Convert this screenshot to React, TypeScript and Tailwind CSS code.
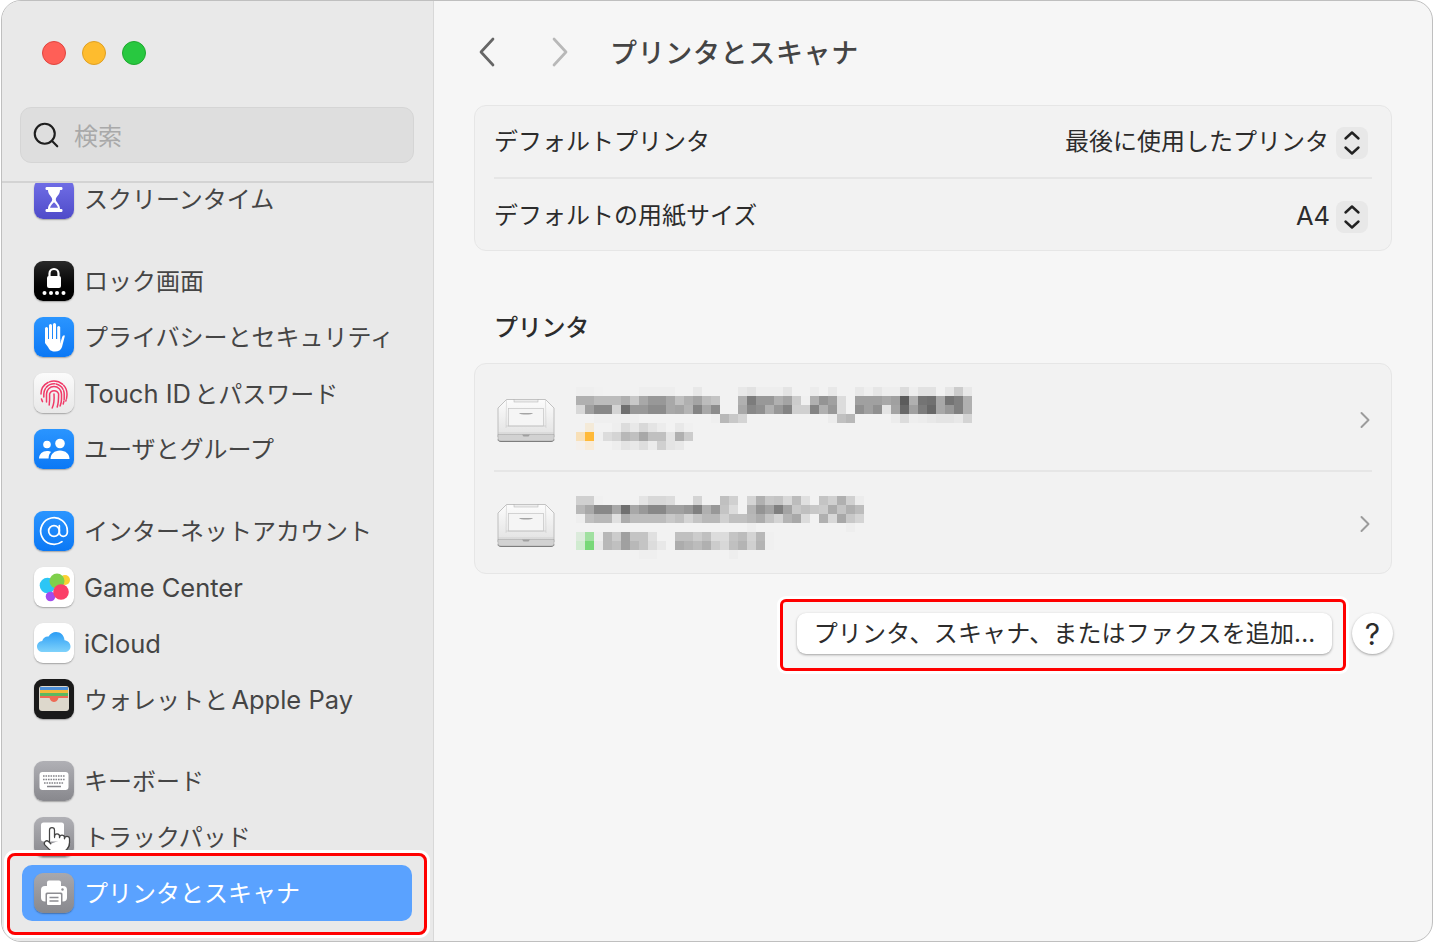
import type { ReactNode } from "react";
import { AtSign, ChevronRight, Pointer, Search } from "lucide-react";

const FONT = "font-['Inter','Noto_Sans_CJK_JP',sans-serif]";

function IconBox({ className, children }: { className: string; children: ReactNode }) {
  return (
    <div className={`relative w-10 h-10 shrink-0 rounded-[9px] overflow-hidden shadow-[0_1px_1.5px_rgba(0,0,0,0.3)] ${className}`}>
      {children}
    </div>
  );
}

function Glyph({ children }: { children: ReactNode }) {
  return (
    <svg viewBox="0 0 40 40" className="w-10 h-10 block">
      {children}
    </svg>
  );
}

// latin runs sit a little larger than the kana around them
const Lat = ({ children }: { children: ReactNode }) => <span className="text-[25.5px]">{children}</span>;
// the gap between latin and kana is narrower than a full space
const Thin = () => <span className="text-[12px]"> </span>;

const ScreenTimeIcon = () => (
  <IconBox className="bg-gradient-to-b from-[#7370e8] to-[#4f4bc9]">
    <Glyph>
      <rect x="11.500" y="8" width="17" height="3" rx="1.200" fill="#fff" />
      <rect x="11.500" y="30" width="17" height="3" rx="1.200" fill="#fff" />
      <path d="M14 11h12c0 5-4.200 6.800-4.200 9.500 0 2.700 4.200 4.500 4.200 9.500H14c0-5 4.200-6.800 4.200-9.500C18.200 17.800 14 16 14 11z" fill="#fff" />
      <path d="M16 28.800c.7-2.800 2.800-4.200 4-5.600 1.200 1.400 3.300 2.800 4 5.600z" fill="#6a66dc" />
    </Glyph>
  </IconBox>
);

const LockIcon = () => (
  <IconBox className="bg-gradient-to-b from-[#2a2a2a] to-black">
    <Glyph>
      <path d="M15.500 16v-3.500a4.500 4.500 0 0 1 9 0V16" fill="none" stroke="#fff" strokeWidth="2.200" />
      <rect x="13" y="15" width="14" height="12" rx="2" fill="#fff" />
      <circle cx="10.500" cy="32" r="2" fill="#fff" />
      <circle cx="17" cy="32" r="2" fill="#fff" />
      <circle cx="23" cy="32" r="2" fill="#fff" />
      <circle cx="29.500" cy="32" r="2" fill="#fff" />
    </Glyph>
  </IconBox>
);

const HandIcon = () => (
  <IconBox className="bg-gradient-to-b from-[#2a95ff] to-[#0a78f5]">
    <Glyph>
      <rect x="11" y="10" width="3" height="16" rx="1.500" fill="#fff" />
      <rect x="15" y="7" width="3" height="18" rx="1.500" fill="#fff" />
      <rect x="19" y="6" width="3" height="19" rx="1.500" fill="#fff" />
      <rect x="23.200" y="9" width="3" height="17" rx="1.500" fill="#fff" />
      <path d="M11 22h15.200v4.500l1.800-6c.8-2.500 3-3.200 2.700-1L28 30c-1 3-3.500 4.500-7 4.500-4 0-5.500-1.500-7-4.500l-3-4z" fill="#fff" />
    </Glyph>
  </IconBox>
);

const FingerprintIcon = () => (
  <IconBox className="bg-gradient-to-b from-[#fbfbfb] to-[#e8e8e8]">
    <Glyph>
      <g fill="none" stroke="#f03a68" strokeWidth="1.500" strokeLinecap="round">
        <path d="M7 21a13 13 0 0 1 26 0c0 3-.5 5-1.200 7" strokeDasharray="14 1.500" />
        <path d="M9.800 24v-3a10.200 10.200 0 0 1 20.400 0v4c0 2-.4 4-1 6" strokeDasharray="9 1.500" />
        <path d="M12.500 29v-8a7.500 7.500 0 0 1 15 0v5c0 3-.6 5-1.400 7" />
        <path d="M15.200 32c.4-3 .6-6 .4-11a4.700 4.700 0 0 1 9 0c0 5 0 9-1.400 13" />
        <path d="M20 21c.4 5 0 10-1.800 14" />
        <path d="M7.500 26c.3 1 .6 1.800 1 2.600" />
      </g>
    </Glyph>
  </IconBox>
);

const UsersIcon = () => (
  <IconBox className="bg-gradient-to-b from-[#2a95ff] to-[#0a78f5]">
    <Glyph>
      <circle cx="13" cy="15.500" r="3.800" fill="#fff" />
      <circle cx="26" cy="14.500" r="4.800" fill="#fff" />
      <path d="M5 29.500c0-4.500 3.600-7.500 8-7.500 1.800 0 3 .4 4 1-1.600 1.600-2.400 3.800-2.400 6.500z" fill="#fff" />
      <path d="M16.500 30c0-5 4-8.500 9.500-8.500S35.500 25 35.500 30z" fill="#fff" />
    </Glyph>
  </IconBox>
);

const AtIcon = () => (
  <IconBox className="bg-gradient-to-b from-[#2a95ff] to-[#0a78f5] flex items-center justify-center">
    <AtSign size={32} color="#fff" strokeWidth={1.300} />
  </IconBox>
);

const GameCenterIcon = () => (
  <IconBox className="bg-white">
    <Glyph>
      <circle cx="13.500" cy="18.500" r="7.800" fill="#2cc6f5" />
      <circle cx="31" cy="13" r="5" fill="#fbd033" />
      <circle cx="23" cy="14" r="7.500" fill="#7fd04b" />
      <circle cx="16.500" cy="29.500" r="4.800" fill="#a24bef" />
      <circle cx="27" cy="25" r="7.800" fill="#fb3f68" />
    </Glyph>
  </IconBox>
);

const CloudIcon = () => (
  <IconBox className="bg-white">
    <svg viewBox="0 0 40 40" className="w-10 h-10 block">
      <defs>
        <linearGradient id="cloud" x1="0" y1="0" x2="0" y2="1">
          <stop offset="0" stopColor="#2b9df5" />
          <stop offset="1" stopColor="#7fd2fb" />
        </linearGradient>
      </defs>
      <path d="M9 29c-3.500 0-6-2.500-6-5.600 0-3 2.300-5.300 5.200-5.500C9.200 14.800 11.700 13 14.600 13.500 16.300 10.600 19 9 22 9c4.700 0 8.200 3.500 8.500 8.200 3.500.5 6 3 6 6.200 0 3.200-2.600 5.600-6 5.600z" fill="url(#cloud)" />
    </svg>
  </IconBox>
);

const WalletIcon = () => (
  <IconBox className="bg-[#1a1a1a]">
    <Glyph>
      <rect x="5" y="7" width="30" height="25" rx="3" fill="#ddd8cc" />
      <rect x="6" y="8" width="28" height="3" fill="#4c8fd8" />
      <rect x="6" y="11" width="28" height="3" fill="#f4b93a" />
      <rect x="6" y="14" width="28" height="3" fill="#5cb860" />
      <path d="M6 17h28v2h-9.500c-1 3-3 4-4.500 4s-3.500-1-4.500-4H6z" fill="#ee6a55" />
    </Glyph>
  </IconBox>
);

const KeyboardIcon = () => (
  <IconBox className="bg-gradient-to-b from-[#b0b0b5] to-[#88888d]">
    <Glyph>
      <rect x="5.500" y="11" width="29" height="18" rx="3" fill="#fff" />
      <g stroke="#85858a" strokeWidth="1.600" strokeDasharray="1.600 0.900">
        <path d="M9 15h22" />
        <path d="M9 18.500h22" />
        <path d="M10 22h20" />
      </g>
      <path d="M13 25.500h14" stroke="#85858a" strokeWidth="1.600" />
    </Glyph>
  </IconBox>
);

const TrackpadIcon = () => (
  <IconBox className="bg-gradient-to-b from-[#b0b0b5] to-[#88888d]">
    <Glyph>
      <rect x="7" y="5.500" width="23" height="19" rx="2.500" fill="#fff" />
    </Glyph>
    <Pointer size={30} fill="#fff" color="#444" strokeWidth={1} className="absolute left-[8px] top-[8px]" />
  </IconBox>
);

const PrinterIcon = () => (
  <IconBox className="bg-gradient-to-b from-[#a8a8ad] to-[#88888d]">
    <Glyph>
      <rect x="13" y="7.500" width="14" height="8" rx="2" fill="#fff" />
      <rect x="7" y="13" width="26" height="15.500" rx="4" fill="#fff" />
      <circle cx="28.500" cy="16.500" r="1.200" fill="#8d8d92" />
      <rect x="11.500" y="19.500" width="17" height="13.500" rx="1.500" fill="#8d8d92" />
      <rect x="13" y="21" width="14" height="11" rx="1" fill="#fff" />
      <path d="M15.500 24.500h9M15.500 28h9" stroke="#8d8d92" strokeWidth="1.300" />
    </Glyph>
  </IconBox>
);

type Item = { id: string; label: ReactNode; icon: ReactNode; gap?: boolean; active?: boolean };

const ITEMS: Item[] = [
  { id: "screentime", label: "スクリーンタイム", icon: <ScreenTimeIcon /> },
  { id: "lock", label: "ロック画面", icon: <LockIcon />, gap: true },
  { id: "privacy", label: "プライバシーとセキュリティ", icon: <HandIcon /> },
  { id: "touchid", label: <><Lat>Touch ID</Lat><Thin />とパスワード</>, icon: <FingerprintIcon /> },
  { id: "users", label: "ユーザとグループ", icon: <UsersIcon /> },
  { id: "accounts", label: "インターネットアカウント", icon: <AtIcon />, gap: true },
  { id: "game", label: <Lat>Game Center</Lat>, icon: <GameCenterIcon /> },
  { id: "icloud", label: <Lat>iCloud</Lat>, icon: <CloudIcon /> },
  { id: "wallet", label: <>ウォレットと<Thin /><Lat>Apple Pay</Lat></>, icon: <WalletIcon /> },
  { id: "keyboard", label: "キーボード", icon: <KeyboardIcon />, gap: true },
  { id: "trackpad", label: "トラックパッド", icon: <TrackpadIcon /> },
  { id: "printers", label: "プリンタとスキャナ", icon: <PrinterIcon />, active: true },
];

function SidebarRow({ item }: { item: Item }) {
  return (
    <div
      className={`flex items-center h-14 gap-[10px] px-3 rounded-[10px] text-[24px] ${
        item.gap ? "mt-[26px]" : ""
      } ${item.active ? "bg-[#5aa2ff] text-white" : "text-[#454545]"}`}
    >
      {item.icon}
      <span className="whitespace-nowrap pt-[2px]">{item.label}</span>
    </div>
  );
}

function Stepper() {
  return (
    <div className="w-8 h-8 rounded-lg bg-[#e8e8e8] shrink-0">
      <svg viewBox="0 0 32 32" className="w-8 h-8 block">
        <path d="M9.500 11.500 16 5.500l6.500 6M9.500 20.500l6.500 6 6.500-6" fill="none" stroke="#222" strokeWidth="2.400" strokeLinecap="round" strokeLinejoin="round" />
      </svg>
    </div>
  );
}

// blurred printer names, one token per 9px block, "." leaves the card showing
const NAME_ONE = [
  "ef ef f1 . . . . ee ee ee ee . . e8 . . . . e8 e2 ee ee ee e4 . . ec . e8 . . e8 ef e6 ee ee dc ee e2 e2 . e6 cc e8",
  "b0 b0 bc bc bc b0 c8 a8 98 98 a8 c0 b0 a4 bc c4 . . b0 7c 98 98 b0 a4 cc f0 b0 94 a0 dc . a0 a0 a0 a8 a0 5c b0 74 70 a8 74 80 b0",
  "d8 a0 88 88 d4 70 98 98 8c 8c a8 a4 b4 84 a8 8c . . a8 88 90 b0 98 84 d0 d0 84 b0 98 dc . 90 a0 90 e4 a4 68 a0 7c 68 a8 98 80 b0",
  ". . ef ef ef ef ef . . . . . . . . ef b8 c8 d4 . . . . . . . . . ec c0 b8 . . . . ec dc ee ec e8 e4 e4 e8 d4",
  ". f4ead8 . . ee dc e8 d8 e4 ec . e8 f0",
  "f8e0b8 ffb938 f0 dc d4 b8 c0 a8 c0 c0 e4 b0 cc",
  "f4f0ec f8ebd8 . . ee e4 e8 de ec d0 e4 e8",
];

const NAME_TWO = [
  "d0 d0 f0 . . . . e4 d8 d8 dc . . d4 . . c0 d0 . d4 b0 c8 c4 d8 bc e0 . c4 d0 b0 d0 ec",
  "b8 a8 88 88 a8 70 a8 98 88 88 a0 a0 98 80 b0 98 c4 dc f2 b4 94 a4 80 a4 c8 c0 c8 cc ac c4 b0 bc",
  "ee c0 b8 b8 e0 ac bc bc bc bc c8 c0 d4 c4 b8 b8 d0 c0 c0 b8 ac c4 d4 b4 a8 dc f2 b0 d8 a8 c8 d4",
  ". . . . . . . . . . . . . . . . . . . ee . . . . . . . . . . ee",
  "dcebdc a0e0a0 ee b8 cc a0 c4 c4 e0 . . c0 c0 cc c0 dc dc c4 bc d4 b8 f0",
  "d0ebd0 78d878 e8 b8 c0 a0 b8 c4 dc e8 . ac b4 bc b0 cc d8 c0 b4 d0 b4 f0",
  ". . . . . . . ef ef . . . . . . . . ee",
];

function Mosaic({ rows }: { rows: string[] }) {
  return (
    <svg width="396" height="63" shapeRendering="crispEdges" className="block shrink-0">
      {rows.map((row, y) =>
        row.split(" ").map((token, x) =>
          token === "." ? null : (
            <rect
              key={`${y}-${x}`}
              x={x * 9}
              y={y * 9}
              width="9"
              height="9"
              fill={token.length === 2 ? `#${token}${token}${token}` : `#${token}`}
            />
          )
        )
      )}
    </svg>
  );
}

function PrinterGlyph() {
  return (
    <svg viewBox="0 0 58 44" className="w-[58px] h-[44px] block shrink-0">
      <defs>
        <linearGradient id="body" x1="0" y1="0" x2="0" y2="1">
          <stop offset="0" stopColor="#fcfcfc" />
          <stop offset="1" stopColor="#e2e2e2" />
        </linearGradient>
      </defs>
      <path d="M1 10 9.500 1.500h39L57 10v29H1z" fill="url(#body)" stroke="#ababab" strokeWidth="0.700" />
      <path d="M9.500 1.500 9 30M48.500 1.500 49 30" stroke="#cfcfcf" strokeWidth="0.600" fill="none" />
      <rect x="17" y="1.500" width="24" height="2.500" fill="#ececec" stroke="#b0b0b0" strokeWidth="0.500" />
      <rect x="11.500" y="10.500" width="35" height="17.500" fill="#f5f5f5" stroke="#c4c4c4" strokeWidth="0.700" />
      <path d="M22 15h14c-1 2-13 2-14 0z" fill="#a4a4a4" />
      <path d="M9 28h40M1 35h56" stroke="#c2c2c2" strokeWidth="0.600" />
      <path d="M1 36.500h56v3.500c0 2-1 3-3 3H4c-2 0-3-1-3-3z" fill="#d2d2d2" stroke="#9c9c9c" strokeWidth="0.500" />
      <path d="M1 41.500c0 1.200 1 2 3 2h50c2 0 3-.8 3-2" fill="none" stroke="#727272" strokeWidth="0.900" />
      <path d="M25 36.500h8l-1.500 2h-5z" fill="#a0a0a0" />
    </svg>
  );
}

function PrinterRow({ rows, top, iconTop }: { rows: string[]; top: string; iconTop: string }) {
  return (
    <div className={`flex items-start gap-[21px] pl-[22px] ${top}`}>
      <div className={iconTop}>
        <PrinterGlyph />
      </div>
      <Mosaic rows={rows} />
    </div>
  );
}

export default function App() {
  return (
    <div className={`relative w-[1434px] h-[943px] bg-white overflow-hidden ${FONT}`}>
      <div className="ml-px w-[1432px] h-[942px] flex rounded-[20px] border border-[#bfbfbf] overflow-hidden bg-[#f6f6f6]">
        {/* sidebar */}
        <aside className="w-[432px] shrink-0 h-full flex flex-col bg-[#e9e9e9] border-r border-[#d8d8d8]">
          <div className="flex gap-4 pl-10 pt-10">
            <div className="w-6 h-6 rounded-full bg-[#ff5f57] border border-[#e0443e]" />
            <div className="w-6 h-6 rounded-full bg-[#febc2e] border border-[#dfa023]" />
            <div className="w-6 h-6 rounded-full bg-[#28c840] border border-[#1fa82f]" />
          </div>
          <div className="ml-[18px] mt-[42px] w-[394px] h-14 rounded-[11px] bg-[#dedede] border border-[#d5d5d5] flex items-center pl-[10px] gap-[13px]">
            <Search size={30} color="#1e1e1e" strokeWidth={1.700} />
            <span className="text-[24px] text-[#a9a9a9] pt-[4px]">検索</span>
          </div>
          <div className="mt-[18px] h-[2px] bg-[#d3d3d3] shrink-0" />
          <div className="flex-1 overflow-hidden">
            <div className="-mt-[12px] ml-5 w-[390px]">
              {ITEMS.map((item) => (
                <SidebarRow key={item.id} item={item} />
              ))}
            </div>
          </div>
        </aside>

        {/* main pane */}
        <main className="flex-1 min-w-0 pl-10 pr-10">
          <div className="flex items-center h-[50px] mt-[26px]">
            <svg viewBox="0 0 20 32" className="w-5 h-8 shrink-0 ml-[3px]">
              <path d="M16 3 4 16l12 13" fill="none" stroke="#666" strokeWidth="2.700" strokeLinecap="round" strokeLinejoin="round" />
            </svg>
            <svg viewBox="0 0 20 32" className="w-5 h-8 shrink-0 ml-[53px]">
              <path d="M4 3l12 13L4 29" fill="none" stroke="#b8b8b8" strokeWidth="2.700" strokeLinecap="round" strokeLinejoin="round" />
            </svg>
            <h1 className="ml-10 pt-[4px] text-[27px] font-medium text-[#444] tracking-[0.65px] whitespace-nowrap">
              プリンタとスキャナ
            </h1>
          </div>

          <section className="mt-[28px] w-[918px] h-[146px] rounded-xl bg-[#f2f2f2] border border-[#e6e6e6] text-[24px] text-[#2c2c2c]">
            <div className="mx-[19px] h-[73px] pt-[3px] flex items-center justify-between border-b-2 border-[#e6e6e6]">
              <span className="pb-[2px]">デフォルトプリンタ</span>
              <div className="flex items-center gap-[7px] mr-1">
                <span className="pb-[2px]">最後に使用したプリンタ</span>
                <Stepper />
              </div>
            </div>
            <div className="mx-[19px] h-[71px] pt-[5px] flex items-center justify-between">
              <span className="pb-[2px]">デフォルトの用紙サイズ</span>
              <div className="flex items-center gap-[6px] mr-1">
                <span className="pb-[2px]"><Lat>A4</Lat></span>
                <Stepper />
              </div>
            </div>
          </section>

          <h2 className="mt-[59px] ml-5 h-[36px] leading-[36px] text-[24px] font-medium text-[#2c2c2c] tracking-[-0.25px]">
            プリンタ
          </h2>

          <section className="relative mt-[17px] w-[918px] h-[211px] rounded-xl bg-[#f2f2f2] border border-[#e6e6e6]">
            <div className="h-[106px]">
              <PrinterRow rows={NAME_ONE} top="pt-[23px]" iconTop="pt-[11px]" />
            </div>
            <div className="mx-[19px] h-[2px] bg-[#e6e6e6]" />
            <PrinterRow rows={NAME_TWO} top="pt-[24px]" iconTop="pt-[7px]" />
            <ChevronRight size={28} color="#9c9c9c" strokeWidth={1.700} className="absolute left-[876px] top-[42px]" />
            <ChevronRight size={28} color="#9c9c9c" strokeWidth={1.700} className="absolute left-[876px] top-[146px]" />
          </section>

          <div className="mt-[39px] w-[919px] flex justify-end gap-5">
            <button className="w-[535px] h-[41px] rounded-[9px] bg-white shadow-[0_1px_2.5px_rgba(0,0,0,0.35)] text-[24px] text-[#2c2c2c] tracking-[0.15px] whitespace-nowrap">
              プリンタ、スキャナ、またはファクスを追加...
            </button>
            <button className="w-[41px] h-[41px] rounded-full bg-white shadow-[0_1px_2.5px_rgba(0,0,0,0.35)] text-[30px] text-[#2c2c2c] leading-none">
              ?
            </button>
          </div>
        </main>
      </div>

      {/* red annotation frames */}
      <div className="absolute left-[7px] top-[853px] w-[420px] h-[82px] rounded-[8px] border-[3px] border-[#f00] shadow-[0_0_0_3px_#fff]" />
      <div className="absolute left-[780px] top-[599px] w-[566px] h-[72px] rounded-[6px] border-[3px] border-[#f00] shadow-[0_0_0_3px_#fff]" />
    </div>
  );
}
